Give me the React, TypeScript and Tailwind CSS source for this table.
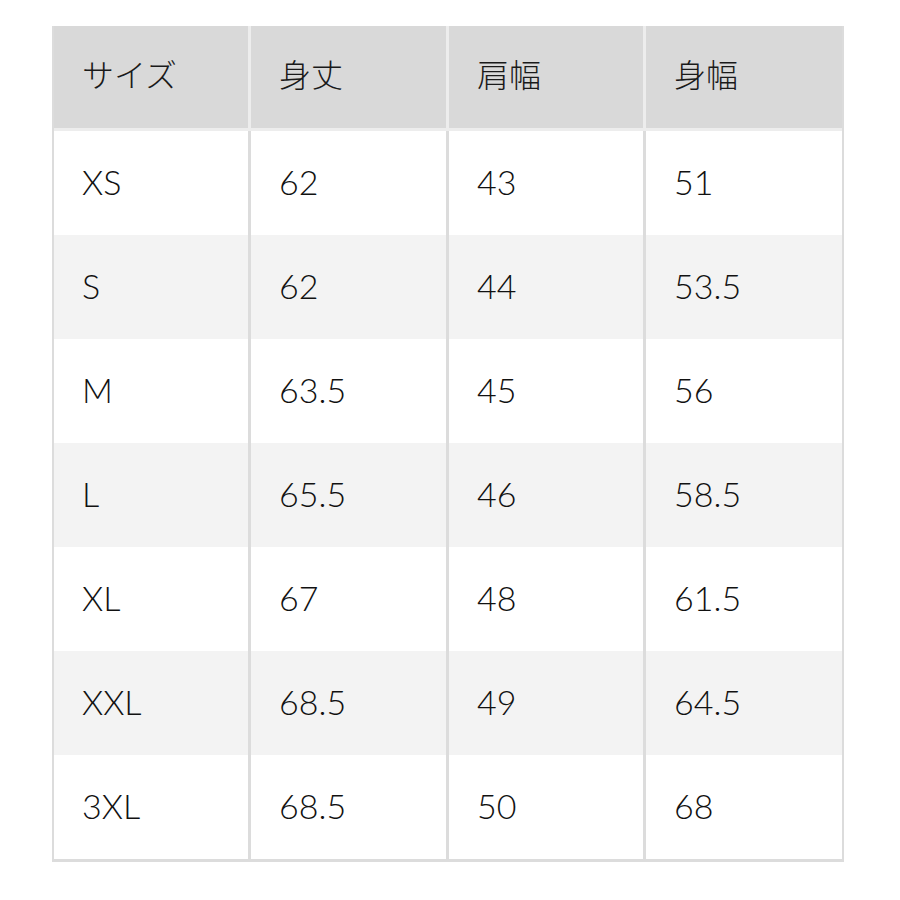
const headers = ["サイズ", "身丈", "肩幅", "身幅"];

const rows = [
  ["XS", "62", "43", "51"],
  ["S", "62", "44", "53.5"],
  ["M", "63.5", "45", "56"],
  ["L", "65.5", "46", "58.5"],
  ["XL", "67", "48", "61.5"],
  ["XXL", "68.5", "49", "64.5"],
  ["3XL", "68.5", "50", "68"],
];

export default function App() {
  return (
    <div
      className="min-h-[900px] bg-white pt-[26px] pl-[52px]"
      style={{ fontFamily: '"Lato", "Noto Sans CJK JP", sans-serif' }}
    >
      <div className="w-[792px] border-x-2 border-b-[3px] border-[#dcdcdc]">
        <div className="grid grid-cols-[197px_198px_197px_196px] h-[105px] bg-[#d9d9d9] border-b-[3px] border-[#ededed]">
          {headers.map((h, i) => (
            <div
              key={h}
              className={
                "flex items-center pl-[28px] pb-[8px] text-[32px] font-light text-[#1a1a1a] " +
                (i < 3 ? "border-r-[3px] border-[#ededed]" : "")
              }
              style={{ fontFamily: '"Noto Sans CJK JP", sans-serif' }}
            >
              {h}
            </div>
          ))}
        </div>
        {rows.map((r, ri) => (
          <div
            key={r[0]}
            className={
              "grid grid-cols-[197px_198px_197px_196px] h-[104px] " +
              (ri % 2 === 1 ? "bg-[#f3f3f3]" : "bg-white")
            }
          >
            {r.map((c, ci) => (
              <div
                key={ci}
                className={
                  "flex items-center pl-[28px] pb-[4px] text-[34px] font-light text-[#111] " +
                  (ci < 3 ? "border-r-[3px] border-[#dcdcdc]" : "")
                }
              >
                {c}
              </div>
            ))}
          </div>
        ))}
      </div>
    </div>
  );
}
